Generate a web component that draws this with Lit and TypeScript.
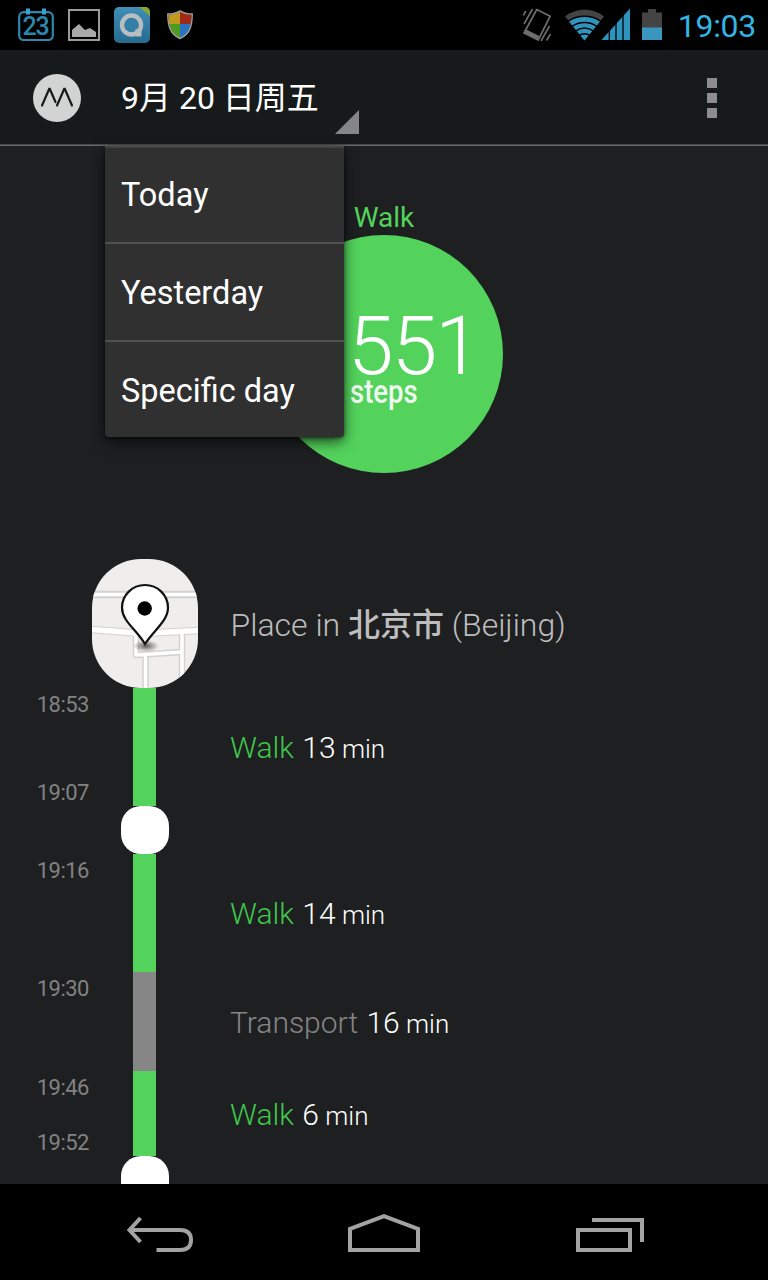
import { LitElement, html, css, nothing } from "lit";
import { customElement, property } from "lit/decorators.js";

type Kind = "walk" | "transport";

interface Segment {
  type: "segment";
  kind: Kind;
  label: string;
  minutes: number;
  start: string;
  end?: string;
  height: number;
}
interface Stop {
  type: "stop";
}
type Entry = Segment | Stop;

const ENTRIES: Entry[] = [
  { type: "segment", kind: "walk", label: "Walk", minutes: 13, start: "18:53", end: "19:07", height: 118 },
  { type: "stop" },
  { type: "segment", kind: "walk", label: "Walk", minutes: 14, start: "19:16", height: 118 },
  { type: "segment", kind: "transport", label: "Transport", minutes: 16, start: "19:30", height: 99 },
  { type: "segment", kind: "walk", label: "Walk", minutes: 6, start: "19:46", end: "19:52", height: 85 },
  { type: "stop" },
];

@customElement("status-bar")
class StatusBar extends LitElement {
  static styles = css`
    :host {
      display: flex;
      align-items: center;
      justify-content: space-between;
      height: 50px;
      background: #000;
      color: #33b5e5;
    }
    svg { display: block; }
    .right { display: flex; align-items: center; padding-right: 12px; }
    .clock {
      font-size: 32px;
      line-height: 50px;
      height: 50px;
      padding-top: 1px;
      box-sizing: border-box;
      letter-spacing: -0.3px;
      margin-left: 13px;
    }
    .date { font: 500 25px Roboto, sans-serif; letter-spacing: -1.2px; }
  `;
  render() {
    return html`
      <svg width="220" height="50" viewBox="0 0 220 50">
        <rect x="19.2" y="12.2" width="33.6" height="27.8" rx="4.5" fill="none" stroke="#2b88ac" stroke-width="2.2" />
        <path d="M26 8.500h4v6h-4zM42 8.500h4v6h-4z" fill="#33a5d2" />
        <text class="date" x="35.500" y="35" text-anchor="middle" fill="#2b88ac">23</text>
        <rect x="69" y="10" width="30" height="30" fill="none" stroke="#9b9b9b" stroke-width="2" />
        <path d="M72 37v-7l7-6 6 6 5-2 6 4v5z" fill="#a9a9a9" />
        <defs>
          <linearGradient id="q" x1="0" y1="0" x2="0" y2="1">
            <stop offset="0" stop-color="#3f8fb8" />
            <stop offset="1" stop-color="#256a91" />
          </linearGradient>
          <clipPath id="qc"><rect x="114" y="7" width="36" height="36" rx="5" /></clipPath>
          <clipPath id="sc"><path d="M180 11.500c3 2 7 3 11.500 3 0 12-2.500 19.500-11.500 23.500-9-4-11.500-11.500-11.500-23.500 4.500 0 8.500-1 11.500-3z" /></clipPath>
        </defs>
        <g clip-path="url(#qc)">
          <rect x="114" y="7" width="36" height="36" fill="url(#q)" />
          <path d="M139 7h11v9z" fill="#88a82e" />
        </g>
        <circle cx="131.500" cy="25" r="9.400" fill="none" stroke="#b9bdbf" stroke-width="4.600" />
        <path d="M135 34l4-5 2.500 1.500v6h-6z" fill="#b9bdbf" />
        <circle cx="131.500" cy="25" r="7.200" fill="#347fa6" />
        <path d="M134 34l4-4-2-1.500z" fill="#b9bdbf" />
        <g clip-path="url(#sc)">
          <path d="M166 9h14v15h-14z" fill="#c09a1e" />
          <path d="M180 9h14v15h-14z" fill="#a12a16" />
          <path d="M166 24h14v16h-14z" fill="#4e9a22" />
          <path d="M180 24h14v16h-14z" fill="#2673c4" />
        </g>
        <path d="M180 10.800c3 2 7.500 3.200 12.200 3.200 0 12.500-2.700 20.300-12.200 24.500-9.500-4.200-12.200-12-12.200-24.500 4.700 0 9.200-1.200 12.200-3.200z" fill="none" stroke="#a5a09a" stroke-width="1.400" />
      </svg>
      <div class="right">
        <svg width="154" height="50" viewBox="511 0 154 50">
          <g fill="none" stroke="#6d6d6d">
            <path d="M536.800 9.500l13.400 6.700-12 23.800-14.200-7z" stroke-width="1.700" stroke-linejoin="round" />
            <path d="M524.300 31l14 7" stroke-width="4.500" />
            <path d="M523.300 15.500l2.500-4.500M524 24l8.500-15M541 41l8.500-15M546.500 40.500l4-6.500" stroke-width="1.600" />
          </g>
          <path d="M584.500 40.500L565 16.500C575.500 7.500 593.500 7.500 604 16.500z" fill="#444" />
          <path d="M584.500 40.500L568.800 21.200C578 14.500 591 14.500 600.200 21.200z" fill="#2f94bd" />
          <g fill="none" stroke="#000" stroke-width="1.500">
            <path d="M568 21.300C577.500 14.500 591.500 14.500 601 21.300" />
            <path d="M571.500 26.800C579.500 21 589.500 21 597.500 26.800" />
            <path d="M575 31.300C581 27 588 27 594 31.300" />
            <path d="M578.500 35.800C582.500 33 586.500 33 590.500 35.800" />
          </g>
          <path d="M601.500 40L630 8.500V40z" fill="#2f94bd" />
          <path d="M609.300 12v28M616 12v28M623 8v32" stroke="#000" stroke-width="1.300" />
          <path d="M642 12.500h6V9h8v3.500h6V28h-20z" fill="#444" />
          <path d="M642 27.500h20V40h-20z" fill="#3a96bd" />
        </svg>
        <div class="clock">19:03</div>
      </div>
    `;
  }
}

@customElement("day-menu")
class DayMenu extends LitElement {
  @property({ attribute: false }) items: string[] = [];
  static styles = css`
    :host {
      display: block;
      width: 239px;
      height: 291px;
      box-sizing: border-box;
      border-top: 2px solid #434343;
      border-radius: 0 0 4px 4px;
      background: #303030;
      box-shadow: 0 5px 14px rgba(0, 0, 0, 0.65), 0 1px 3px rgba(0, 0, 0, 0.5);
    }
    .item {
      box-sizing: border-box;
      height: 98px;
      padding: 1px 0 0 16px;
      font-size: 32.500px;
      line-height: 96px;
      border-bottom: 2px solid #515151;
      color: #fff;
      white-space: nowrap;
    }
    .item:first-child { height: 96px; line-height: 92px; }
    .item:last-child { border-bottom: 0; height: 95px; }
  `;
  render() {
    return this.items.map((i) => html`<div class="item">${i}</div>`);
  }
}

@customElement("action-bar")
class ActionBar extends LitElement {
  static styles = css`
    :host {
      display: flex;
      align-items: center;
      position: relative;
      height: 96px;
      box-sizing: border-box;
      background: #171a1b;
      border-bottom: 1px solid #69696b;
      box-shadow: inset 0 -1px #48484a;
      z-index: 2;
    }
    .logo { display: block; margin-left: 33px; }
    .spinner {
      display: flex;
      align-items: flex-end;
      justify-content: space-between;
      width: 238px;
      height: 95px;
      margin-left: 40px;
      box-sizing: border-box;
      padding: 0 0 11px;
    }
    .spinner svg { display: block; }
    .title {
      font-size: 32px;
      line-height: 40px;
      margin-bottom: 16px;
      white-space: nowrap;
      color: #fff;
    }
    .more { display: grid; gap: 5px; margin-left: auto; margin-right: 51px; }
    .more i { display: block; width: 10px; height: 10px; background: #8d8d8e; }
    day-menu { position: absolute; left: 105px; top: 96px; }
  `;
  render() {
    return html`
      <svg class="logo" width="48" height="48" viewBox="0 0 48 48">
        <circle cx="24" cy="24" r="24" fill="#d2d4d3" />
        <path d="M9 31.500L16.500 14.200 22.500 28M24 31.500L31.500 14.200 39 31.500" fill="none" stroke="#171a1b" stroke-width="2.200" stroke-linecap="round" stroke-linejoin="bevel" />
      </svg>
      <div class="spinner">
        <div class="title">9月 20 日周五</div>
        <svg width="24" height="24" viewBox="0 0 24 24"><path d="M24 0v24H0z" fill="#858787" /></svg>
      </div>
      <div class="more"><i></i><i></i><i></i></div>
      <day-menu .items=${["Today", "Yesterday", "Specific day"]}></day-menu>
    `;
  }
}

@customElement("step-summary")
class StepSummary extends LitElement {
  static styles = css`
    :host {
      display: flex;
      flex-direction: column;
      align-items: center;
      height: 413px;
      box-sizing: border-box;
      padding-top: 55px;
    }
    .name { font-size: 28px; line-height: 34px; color: #53d35c; }
    .circle {
      width: 238px;
      height: 238px;
      border-radius: 50%;
      background: #53d35c;
      color: #fff;
      box-sizing: border-box;
      padding: 79px 0 0 83px;
    }
    .count { font-size: 82px; font-weight: 300; line-height: 65px; letter-spacing: -1.8px; }
    .unit {
      font-size: 34px;
      line-height: 25px;
      font-weight: 500;
      transform: scaleX(0.81);
      transform-origin: left;
      opacity: 0.9;
      margin-left: 2px;
    }
  `;
  render() {
    return html`
      <div class="name">Walk</div>
      <div class="circle">
        <div class="count">551</div>
        <div class="unit">steps</div>
      </div>
    `;
  }
}

@customElement("day-timeline")
class DayTimeline extends LitElement {
  static styles = css`
    :host { display: block; }
    .row {
      display: grid;
      grid-template-columns: 92px 106px 1fr;
      align-items: stretch;
    }
    .times {
      display: flex;
      flex-direction: column;
      justify-content: space-between;
      align-items: flex-end;
      padding: 4px 3px 0 0;
      font-size: 22px;
      line-height: 26px;
      letter-spacing: -0.5px;
      color: #828282;
    }
    .track { display: flex; justify-content: center; }
    .bar { width: 23px; margin-right: 1px; }
    .walk .bar { background: #53d35c; }
    .transport .bar { background: #868686; }
    .text {
      display: flex;
      align-items: center;
      padding: 3px 0 0 32px;
      font-weight: 300;
      font-size: 30px;
      line-height: 40px;
      color: #fff;
      white-space: pre;
    }
    .text small { font-size: 26px; }
    .kind { margin-right: 1px; }
    .walk .kind { color: #3fc74b; }
    .transport .kind { color: #858585; }
    .place .text { font-size: 32px; color: #bdbdbd; padding: 2px 0 0 32.500px; }
    .place b { font-weight: 500; }
    .map { display: block; }
    .stop { width: 48px; height: 48px; border-radius: 20px; background: #fff; }
  `;
  private map() {
    return html`<svg class="map" width="106" height="129" viewBox="0 0 106 129">
      <defs>
        <clipPath id="m"><rect width="106" height="129" rx="49" ry="49" /></clipPath>
        <radialGradient id="sh"><stop offset="0" stop-opacity=".6" /><stop offset="1" stop-opacity="0" /></radialGradient>
      </defs>
      <g clip-path="url(#m)">
        <rect width="106" height="129" fill="#efeeed" />
        <g fill="none" stroke="#d2d2d2" stroke-width="7.500" stroke-linejoin="round">
          <path d="M0 35.500h106" />
          <path d="M0 70.500L50 74.500 106 71.500" />
          <path d="M44 74v22l46-3M53.500 96v34M90 73v56" stroke-width="6.500" />
        </g>
        <g fill="none" stroke="#fff" stroke-linejoin="round">
          <path d="M0 35.500h106" stroke-width="3.500" />
          <path d="M0 70.500L50 74.500 106 71.500" stroke-width="5.500" />
          <path d="M44 74v22l46-3M53.500 96v34M90 73v56" stroke-width="3.500" />
        </g>
        <ellipse cx="54" cy="87" rx="13" ry="6" fill="url(#sh)" />
      </g>
      <path d="M53 85C44 70 30 62 30 48.500a23 22.500 0 0 1 46 0C76 62 62 71 53 85z" fill="#fff" stroke="#111" stroke-width="2.200" />
      <circle cx="52.700" cy="49.500" r="7.200" />
    </svg>`;
  }
  render() {
    return html`
      <div class="row place">
        <div></div>
        ${this.map()}
        <div class="text">Place in <b>北京市</b> (Beijing)</div>
      </div>
      ${ENTRIES.map((e) =>
        e.type === "stop"
          ? html`<div class="row"><div></div><div class="track"><div class="stop"></div></div></div>`
          : html`<div class="row ${e.kind}" style="height:${e.height}px">
              <div class="times"><span>${e.start}</span>${e.end ? html`<span>${e.end}</span>` : nothing}</div>
              <div class="track"><div class="bar"></div></div>
              <div class="text"><div><span class="kind">${e.label}</span> ${e.minutes}<small> min</small></div></div>
            </div>`
      )}
    `;
  }
}

@customElement("nav-bar")
class NavBar extends LitElement {
  static styles = css`
    :host {
      display: flex;
      align-items: center;
      justify-content: space-between;
      height: 96px;
      box-sizing: border-box;
      padding: 0 120px;
      background: #000;
    }
    svg { display: block; fill: none; stroke: #a3a3a3; stroke-width: 4; }
  `;
  render() {
    return html`
      <svg width="80" height="96" viewBox="120 1184 80 96">
        <path d="M130 1230H180C188 1230 191 1234 191 1240S188 1250 180 1250H156.500" />
        <path d="M140.500 1218L129.500 1230 140.500 1242" />
      </svg>
      <svg width="80" height="96" viewBox="344 1184 80 96">
        <path d="M350 1250V1229L384 1216.200 418 1229V1250z" />
      </svg>
      <svg width="80" height="96" viewBox="568 1184 80 96">
        <path d="M578 1230H630V1250H578zM592 1220H642V1242" />
      </svg>
    `;
  }
}

@customElement("app-root")
class AppRoot extends LitElement {
  static styles = css`
    :host {
      display: grid;
      grid-template-rows: 50px 96px 1fr 96px;
      width: 768px;
      height: 1280px;
      overflow: hidden;
      background: #1e1f21;
      font-family: Roboto, "Noto Sans CJK SC", sans-serif;
    }
    .content { overflow: hidden; min-height: 0; }
  `;
  render() {
    return html`
      <status-bar></status-bar>
      <action-bar></action-bar>
      <div class="content">
        <step-summary></step-summary>
        <day-timeline></day-timeline>
      </div>
      <nav-bar></nav-bar>
    `;
  }
}
